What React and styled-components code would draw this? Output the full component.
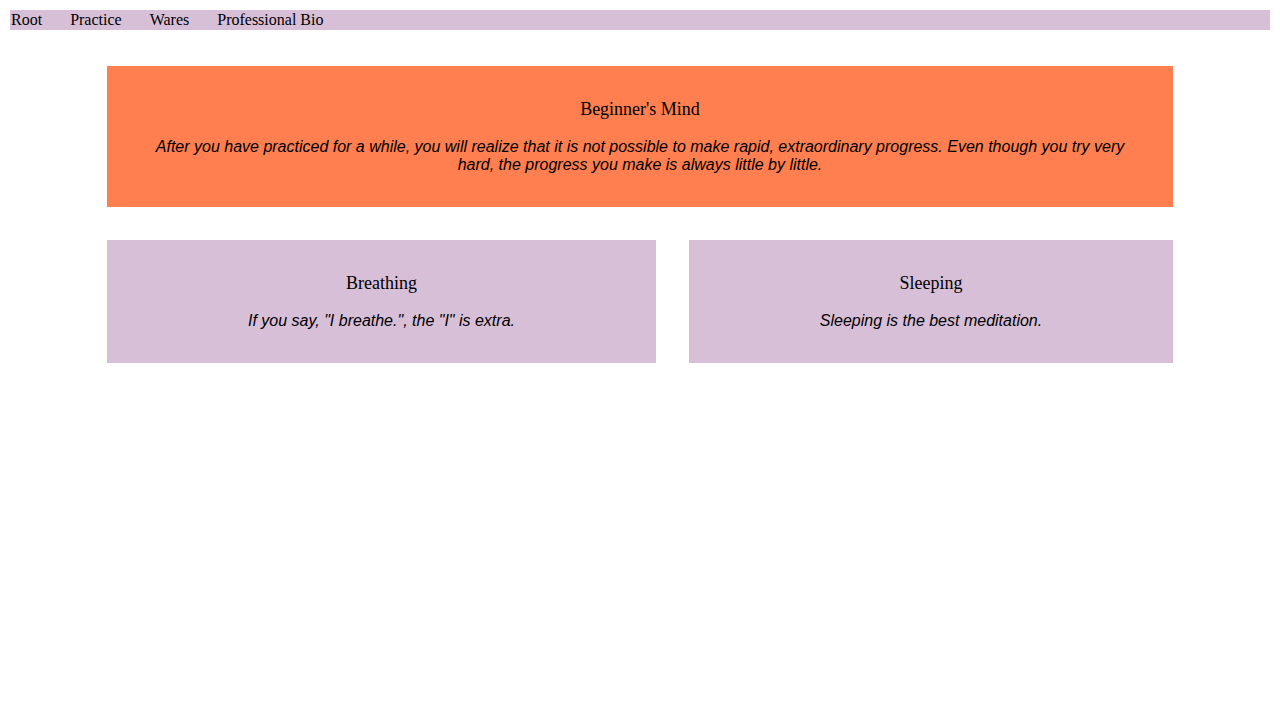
import styled, { createGlobalStyle } from "styled-components";

const GlobalStyle = createGlobalStyle`
  body {
    margin: 10px;
    background: #fff;
    color: #000;
    font-family: "Liberation Serif", "Times New Roman", serif;
  }
`;

const Nav = styled.nav`
  display: flex;
  gap: 28px;
  height: 20px;
  padding: 0 1px;
  background-color: thistle;
  font-size: 16px;
  line-height: 20px;
`;

const NavLink = styled.a`
  color: #000;
  text-decoration: none;
`;

const Main = styled.main`
  width: 1066px;
  margin: 36px auto 0;
  display: flex;
  flex-direction: column;
  gap: 33px;
`;

const Row = styled.div`
  display: grid;
  grid-template-columns: 549fr 484fr;
  gap: 33px;
`;

const Card = styled.section`
  background-color: ${(p) => (p.$hero ? "coral" : "thistle")};
  padding: 32px 48px 33px;
  text-align: center;
`;

const Title = styled.h2`
  margin: 0 0 18px;
  font-weight: normal;
  font-size: 18px;
  line-height: 22px;
`;

const Quote = styled.p`
  margin: 0;
  font-family: "Liberation Sans", Arial, sans-serif;
  font-style: italic;
  font-size: 16px;
  line-height: 18px;
`;

const links = ["Root", "Practice", "Wares", "Professional Bio"];

const App = () => {
  return (
    <>
      <GlobalStyle />
      <Nav>
        {links.map((l) => (
          <NavLink key={l} href="#">
            {l}
          </NavLink>
        ))}
      </Nav>
      <Main>
        <Card $hero>
          <Title>Beginner's Mind</Title>
          <Quote>
            After you have practiced for a while, you will realize that it is
            not possible to make rapid, extraordinary progress. Even though you
            try very hard, the progress you make is always little by little.
          </Quote>
        </Card>
        <Row>
          <Card>
            <Title>Breathing</Title>
            <Quote>If you say, "I breathe.", the "I" is extra.</Quote>
          </Card>
          <Card>
            <Title>Sleeping</Title>
            <Quote>Sleeping is the best meditation.</Quote>
          </Card>
        </Row>
      </Main>
    </>
  );
};

export default App;
